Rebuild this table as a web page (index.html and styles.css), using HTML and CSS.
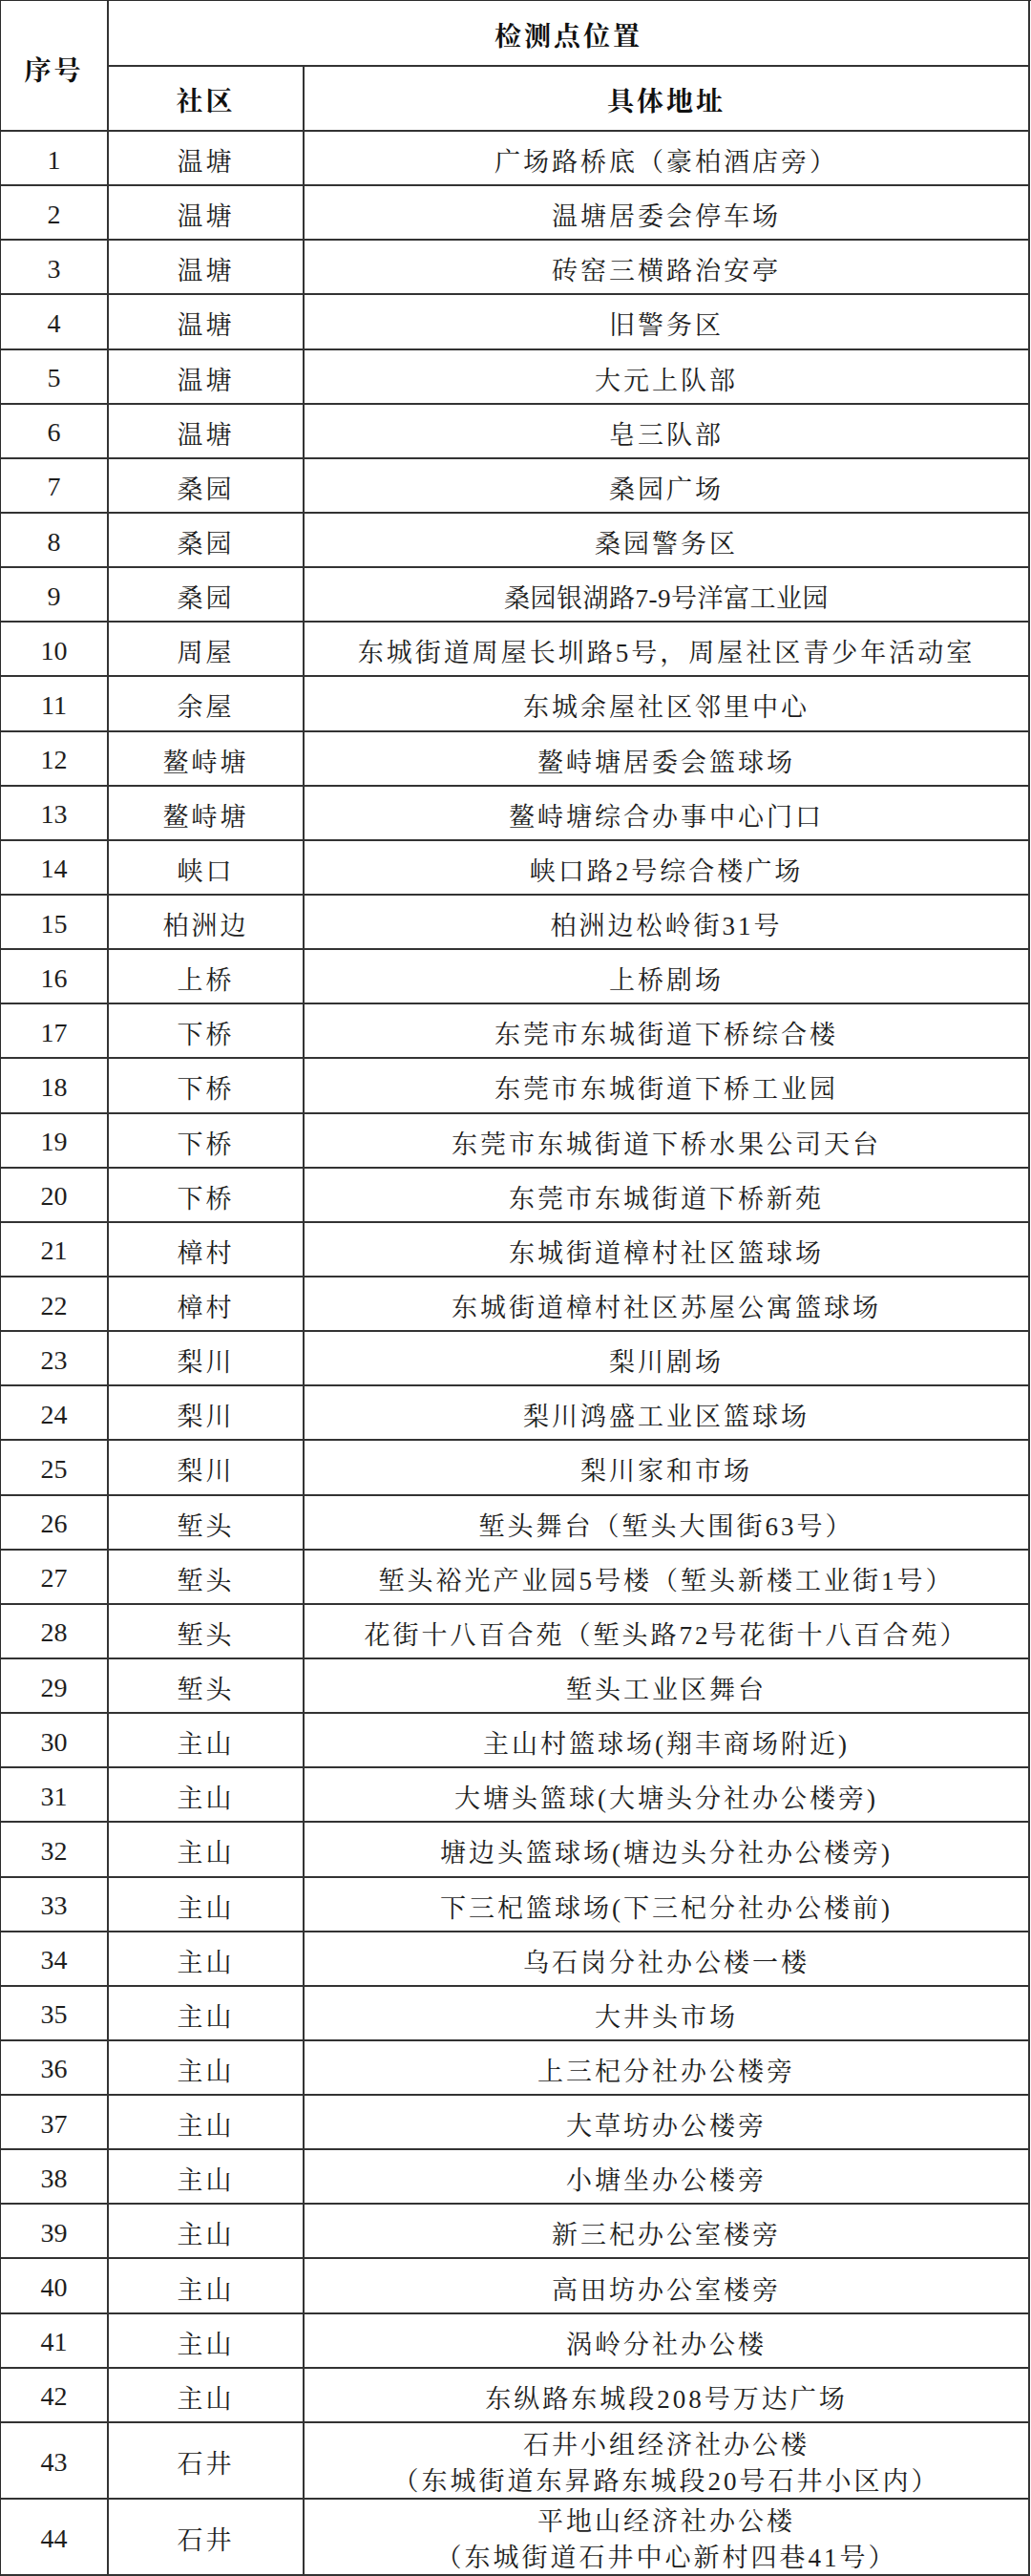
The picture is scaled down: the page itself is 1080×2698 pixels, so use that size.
FILE: index.html
```html
<!DOCTYPE html>
<html lang="zh-CN">
<head>
<meta charset="utf-8">
<title>检测点位置</title>
<link rel="stylesheet" href="styles.css">
</head>
<body>
<div class="sheet">
  <div class="cell head no">序号</div>
  <div class="cell head span">检测点位置</div>
  <div class="cell head">社区</div>
  <div class="cell head">具体地址</div>

  <div class="cell num">1</div><div class="cell comm">温塘</div><div class="cell addr">广场路桥底（豪柏酒店旁）</div>
  <div class="cell num">2</div><div class="cell comm">温塘</div><div class="cell addr">温塘居委会停车场</div>
  <div class="cell num">3</div><div class="cell comm">温塘</div><div class="cell addr">砖窑三横路治安亭</div>
  <div class="cell num">4</div><div class="cell comm">温塘</div><div class="cell addr">旧警务区</div>
  <div class="cell num">5</div><div class="cell comm">温塘</div><div class="cell addr">大元上队部</div>
  <div class="cell num">6</div><div class="cell comm">温塘</div><div class="cell addr">皂三队部</div>
  <div class="cell num">7</div><div class="cell comm">桑园</div><div class="cell addr">桑园广场</div>
  <div class="cell num">8</div><div class="cell comm">桑园</div><div class="cell addr">桑园警务区</div>
  <div class="cell num">9</div><div class="cell comm">桑园</div><div class="cell addr tight">桑园银湖路7-9号洋富工业园</div>
  <div class="cell num">10</div><div class="cell comm">周屋</div><div class="cell addr">东城街道周屋长圳路5号，周屋社区青少年活动室</div>
  <div class="cell num">11</div><div class="cell comm">余屋</div><div class="cell addr">东城余屋社区邻里中心</div>
  <div class="cell num">12</div><div class="cell comm">鳌峙塘</div><div class="cell addr">鳌峙塘居委会篮球场</div>
  <div class="cell num">13</div><div class="cell comm">鳌峙塘</div><div class="cell addr">鳌峙塘综合办事中心门口</div>
  <div class="cell num">14</div><div class="cell comm">峡口</div><div class="cell addr">峡口路2号综合楼广场</div>
  <div class="cell num">15</div><div class="cell comm">柏洲边</div><div class="cell addr">柏洲边松岭街31号</div>
  <div class="cell num">16</div><div class="cell comm">上桥</div><div class="cell addr">上桥剧场</div>
  <div class="cell num">17</div><div class="cell comm">下桥</div><div class="cell addr">东莞市东城街道下桥综合楼</div>
  <div class="cell num">18</div><div class="cell comm">下桥</div><div class="cell addr">东莞市东城街道下桥工业园</div>
  <div class="cell num">19</div><div class="cell comm">下桥</div><div class="cell addr">东莞市东城街道下桥水果公司天台</div>
  <div class="cell num">20</div><div class="cell comm">下桥</div><div class="cell addr">东莞市东城街道下桥新苑</div>
  <div class="cell num">21</div><div class="cell comm">樟村</div><div class="cell addr">东城街道樟村社区篮球场</div>
  <div class="cell num">22</div><div class="cell comm">樟村</div><div class="cell addr">东城街道樟村社区苏屋公寓篮球场</div>
  <div class="cell num">23</div><div class="cell comm">梨川</div><div class="cell addr">梨川剧场</div>
  <div class="cell num">24</div><div class="cell comm">梨川</div><div class="cell addr">梨川鸿盛工业区篮球场</div>
  <div class="cell num">25</div><div class="cell comm">梨川</div><div class="cell addr">梨川家和市场</div>
  <div class="cell num">26</div><div class="cell comm">堑头</div><div class="cell addr">堑头舞台（堑头大围街63号）</div>
  <div class="cell num">27</div><div class="cell comm">堑头</div><div class="cell addr">堑头裕光产业园5号楼（堑头新楼工业街1号）</div>
  <div class="cell num">28</div><div class="cell comm">堑头</div><div class="cell addr">花街十八百合苑（堑头路72号花街十八百合苑）</div>
  <div class="cell num">29</div><div class="cell comm">堑头</div><div class="cell addr">堑头工业区舞台</div>
  <div class="cell num">30</div><div class="cell comm">主山</div><div class="cell addr">主山村篮球场(翔丰商场附近)</div>
  <div class="cell num">31</div><div class="cell comm">主山</div><div class="cell addr">大塘头篮球(大塘头分社办公楼旁)</div>
  <div class="cell num">32</div><div class="cell comm">主山</div><div class="cell addr">塘边头篮球场(塘边头分社办公楼旁)</div>
  <div class="cell num">33</div><div class="cell comm">主山</div><div class="cell addr">下三杞篮球场(下三杞分社办公楼前)</div>
  <div class="cell num">34</div><div class="cell comm">主山</div><div class="cell addr">乌石岗分社办公楼一楼</div>
  <div class="cell num">35</div><div class="cell comm">主山</div><div class="cell addr">大井头市场</div>
  <div class="cell num">36</div><div class="cell comm">主山</div><div class="cell addr">上三杞分社办公楼旁</div>
  <div class="cell num">37</div><div class="cell comm">主山</div><div class="cell addr">大草坊办公楼旁</div>
  <div class="cell num">38</div><div class="cell comm">主山</div><div class="cell addr">小塘坐办公楼旁</div>
  <div class="cell num">39</div><div class="cell comm">主山</div><div class="cell addr">新三杞办公室楼旁</div>
  <div class="cell num">40</div><div class="cell comm">主山</div><div class="cell addr">高田坊办公室楼旁</div>
  <div class="cell num">41</div><div class="cell comm">主山</div><div class="cell addr">涡岭分社办公楼</div>
  <div class="cell num">42</div><div class="cell comm">主山</div><div class="cell addr">东纵路东城段208号万达广场</div>
  <div class="cell num">43</div><div class="cell comm">石井</div><div class="cell addr two"><span>石井小组经济社办公楼</span><span>（东城街道东昇路东城段20号石井小区内）</span></div>
  <div class="cell num">44</div><div class="cell comm">石井</div><div class="cell addr two"><span>平地山经济社办公楼</span><span>（东城街道石井中心新村四巷41号）</span></div>
</div>
</body>
</html>
```

FILE: styles.css
```css
html, body {
  margin: 0;
  padding: 0;
  background: #ffffff;
}

.sheet {
  display: grid;
  grid-template-columns: 113px 205px 760px;
  grid-template-rows: 69px 68px repeat(42, 57.15px) 80px 80px;
  width: 1079px;
  border-top: 1px solid #2b2b2b;
  border-left: 1px solid #2b2b2b;
  font-family: "Liberation Serif", "Noto Serif CJK SC", "Noto Sans CJK SC", serif;
  color: #1e1e1e;
}

.cell {
  box-sizing: border-box;
  border-right: 2px solid #333333;
  border-bottom: 2px solid #333333;
  display: flex;
  flex-direction: column;
  align-items: center;
  justify-content: center;
  text-align: center;
  font-size: 27px;
  letter-spacing: 3px;
  padding-top: 4px;
  white-space: nowrap;
}

.head {
  font-weight: bold;
  font-size: 28px;
  letter-spacing: 3px;
  color: #111111;
  padding-top: 2px;
}

.head.no {
  grid-row: span 2;
  padding-top: 6px;
}

.head.span {
  grid-column: span 2;
}

.num {
  font-size: 28px;
  letter-spacing: 0;
}

.addr.tight {
  letter-spacing: 0.5px;
}

.addr.two {
  line-height: 38px;
  padding-top: 6px;
}
```
